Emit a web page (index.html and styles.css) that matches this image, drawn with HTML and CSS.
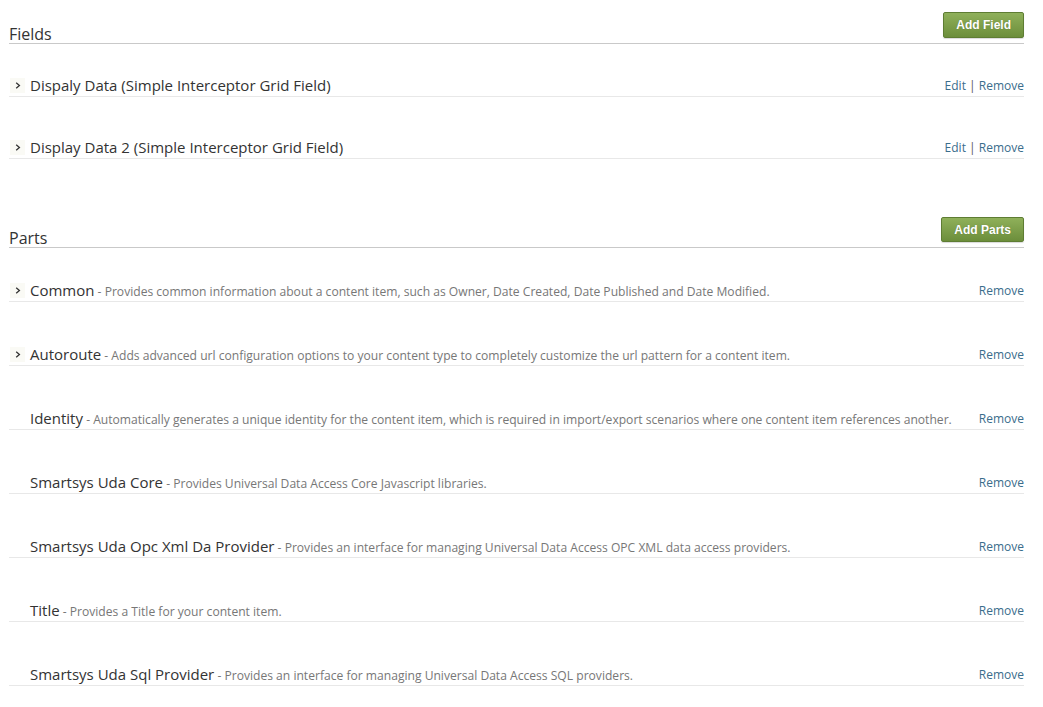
FILE: index.html
```html
<!DOCTYPE html>
<html>
<head>
<meta charset="utf-8">
<link rel="stylesheet" href="styles.css">
</head>
<body>
<div class="page">
  <section class="section fields">
    <div class="section-head">
      <h2 class="section-title">Fields</h2>
      <button class="btn">Add Field</button>
    </div>
    <div class="row">
      <div class="row-main"><span class="chev"><svg width="8" height="9" viewBox="0 0 8 9"><path d="M2.2 1.8 L5.4 4.5 L2.2 7.2" fill="none" stroke="#333" stroke-width="1.3"/></svg></span><span class="name">Dispaly Data (Simple Interceptor Grid Field)</span></div>
      <div class="actions"><a class="link">Edit</a> <span class="sep">|</span> <a class="link">Remove</a></div>
    </div>
    <div class="row">
      <div class="row-main"><span class="chev"><svg width="8" height="9" viewBox="0 0 8 9"><path d="M2.2 1.8 L5.4 4.5 L2.2 7.2" fill="none" stroke="#333" stroke-width="1.3"/></svg></span><span class="name">Display Data 2 (Simple Interceptor Grid Field)</span></div>
      <div class="actions"><a class="link">Edit</a> <span class="sep">|</span> <a class="link">Remove</a></div>
    </div>
  </section>

  <section class="section parts">
    <div class="section-head">
      <h2 class="section-title">Parts</h2>
      <button class="btn">Add Parts</button>
    </div>
    <div class="row">
      <div class="row-main"><span class="chev"><svg width="8" height="9" viewBox="0 0 8 9"><path d="M2.2 1.8 L5.4 4.5 L2.2 7.2" fill="none" stroke="#333" stroke-width="1.3"/></svg></span><span class="name">Common</span><span class="desc"> - Provides common information about a content item, such as Owner, Date Created, Date Published and Date Modified.</span></div>
      <div class="actions"><a class="link">Remove</a></div>
    </div>
    <div class="row">
      <div class="row-main"><span class="chev"><svg width="8" height="9" viewBox="0 0 8 9"><path d="M2.2 1.8 L5.4 4.5 L2.2 7.2" fill="none" stroke="#333" stroke-width="1.3"/></svg></span><span class="name">Autoroute</span><span class="desc"> - Adds advanced url configuration options to your content type to completely customize the url pattern for a content item.</span></div>
      <div class="actions"><a class="link">Remove</a></div>
    </div>
    <div class="row">
      <div class="row-main"><span class="chev empty"></span><span class="name">Identity</span><span class="desc"> - Automatically generates a unique identity for the content item, which is required in import/export scenarios where one content item references another.</span></div>
      <div class="actions"><a class="link">Remove</a></div>
    </div>
    <div class="row">
      <div class="row-main"><span class="chev empty"></span><span class="name">Smartsys Uda Core</span><span class="desc"> - Provides Universal Data Access Core Javascript libraries.</span></div>
      <div class="actions"><a class="link">Remove</a></div>
    </div>
    <div class="row">
      <div class="row-main"><span class="chev empty"></span><span class="name">Smartsys Uda Opc Xml Da Provider</span><span class="desc"> - Provides an interface for managing Universal Data Access OPC XML data access providers.</span></div>
      <div class="actions"><a class="link">Remove</a></div>
    </div>
    <div class="row">
      <div class="row-main"><span class="chev empty"></span><span class="name">Title</span><span class="desc"> - Provides a Title for your content item.</span></div>
      <div class="actions"><a class="link">Remove</a></div>
    </div>
    <div class="row">
      <div class="row-main"><span class="chev empty"></span><span class="name">Smartsys Uda Sql Provider</span><span class="desc"> - Provides an interface for managing Universal Data Access SQL providers.</span></div>
      <div class="actions"><a class="link">Remove</a></div>
    </div>
  </section>
</div>
</body>
</html>
```

FILE: styles.css
```css
html, body {
  margin: 0;
  padding: 0;
  background: #fff;
}
body {
  font-family: "Open Sans", "Noto Sans", sans-serif;
  color: #333;
}
.page {
  padding: 12px 19px 0 9px;
}
.section-head {
  display: flex;
  justify-content: space-between;
  align-items: flex-end;
  border-bottom: 1px solid #c9c9c9;
  padding-bottom: 5px;
}
.section-title {
  margin: 0;
  font-size: 16px;
  font-weight: normal;
  line-height: 20px;
  color: #333;
  position: relative;
  top: 6px;
}
.btn {
  font-family: "Liberation Sans", Arial, sans-serif;
  font-weight: bold;
  font-size: 12px;
  color: #fff;
  text-shadow: 0 0 1px rgba(0,0,0,0.25);
  background: linear-gradient(#8fb05a, #6c8e3b);
  border: 1px solid #5e7d33;
  border-radius: 2px;
  height: 26px;
  padding: 0 12px;
  box-shadow: 0 1px 1px rgba(0,0,0,0.15);
}
.parts .btn {
  height: 25px;
}
.parts {
  margin-top: 58px;
}
.row {
  display: flex;
  justify-content: space-between;
  align-items: center;
  height: 22px;
  padding-top: 39px;
  border-bottom: 1px solid #e8e8e8;
}
.row:nth-child(2) {
  padding-top: 30px;
}
.parts .row {
  padding-top: 41px;
}
.parts .row:nth-child(2) {
  padding-top: 31px;
}
.row-main {
  display: flex;
  align-items: baseline;
  white-space: nowrap;
}
.chev {
  display: inline-flex;
  align-items: center;
  justify-content: center;
  width: 15px;
  height: 15px;
  margin: 0 5px 0 1px;
  background: #fafaf5;
  align-self: center;
}
.chev.empty {
  background: none;
}
.name {
  font-size: 15px;
  color: #333;
}
.desc {
  font-size: 12.1px;
  color: #777;
  white-space: pre;
}
.actions {
  font-size: 12px;
  color: #333;
  white-space: nowrap;
}
.link {
  color: #3a6d8c;
  text-decoration: none;
  cursor: pointer;
}
.sep {
  color: #555;
}
```
